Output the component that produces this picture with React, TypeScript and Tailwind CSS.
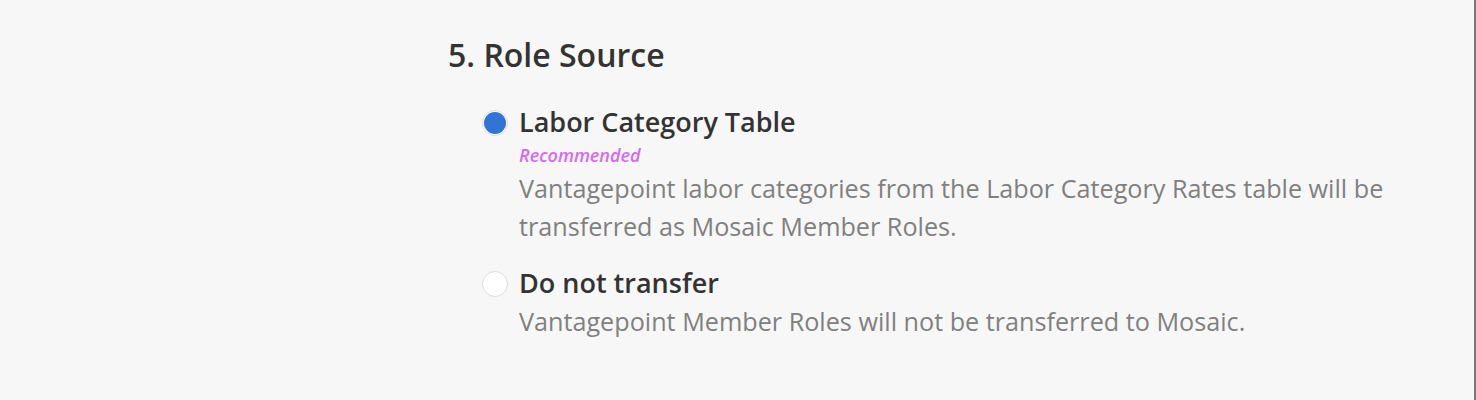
const options = [
  {
    id: 'labor',
    label: 'Labor Category Table',
    recommended: true,
    selected: true,
    description:
      'Vantagepoint labor categories from the Labor Category Rates table will be transferred as Mosaic Member Roles.',
  },
  {
    id: 'none',
    label: 'Do not transfer',
    recommended: false,
    selected: false,
    description: 'Vantagepoint Member Roles will not be transferred to Mosaic.',
  },
]

function Radio({ selected }: { selected: boolean }) {
  return (
    <span className="mt-[7px] flex h-[26px] w-[26px] shrink-0 items-center justify-center rounded-full border border-[#dcdcdc] bg-white">
      {selected && <span className="h-[22px] w-[22px] rounded-full bg-[#3274d6]" />}
    </span>
  )
}

export default function App() {
  return (
    <div
      className="flex h-[400px] w-full bg-[#f7f7f7] text-[#333]"
      style={{ fontFamily: '"Open Sans", "Liberation Sans", sans-serif' }}
    >
      <div className="flex-1 pl-[448px] pt-[33px]">
        <h2 className="text-[32px] font-semibold leading-[44px] text-[#333]">5. Role Source</h2>
        <div className="mt-[26px] flex flex-col gap-[19px] pl-[34px]">
          {options.map((o) => (
            <div key={o.id} className="flex items-start gap-[11px]">
              <Radio selected={o.selected} />
              <div className="flex flex-col">
                <div className="text-[27px] font-semibold leading-[38px] text-[#333]">{o.label}</div>
                {o.recommended && (
                  <div className="text-[18px] font-semibold italic leading-[28px] text-[#d16bf6]">
                    Recommended
                  </div>
                )}
                <p className="max-w-[880px] text-[25.2px] leading-[38px] text-[#808080]">{o.description}</p>
              </div>
            </div>
          ))}
        </div>
      </div>
      <div className="w-[2px] bg-[#777]" />
    </div>
  )
}
